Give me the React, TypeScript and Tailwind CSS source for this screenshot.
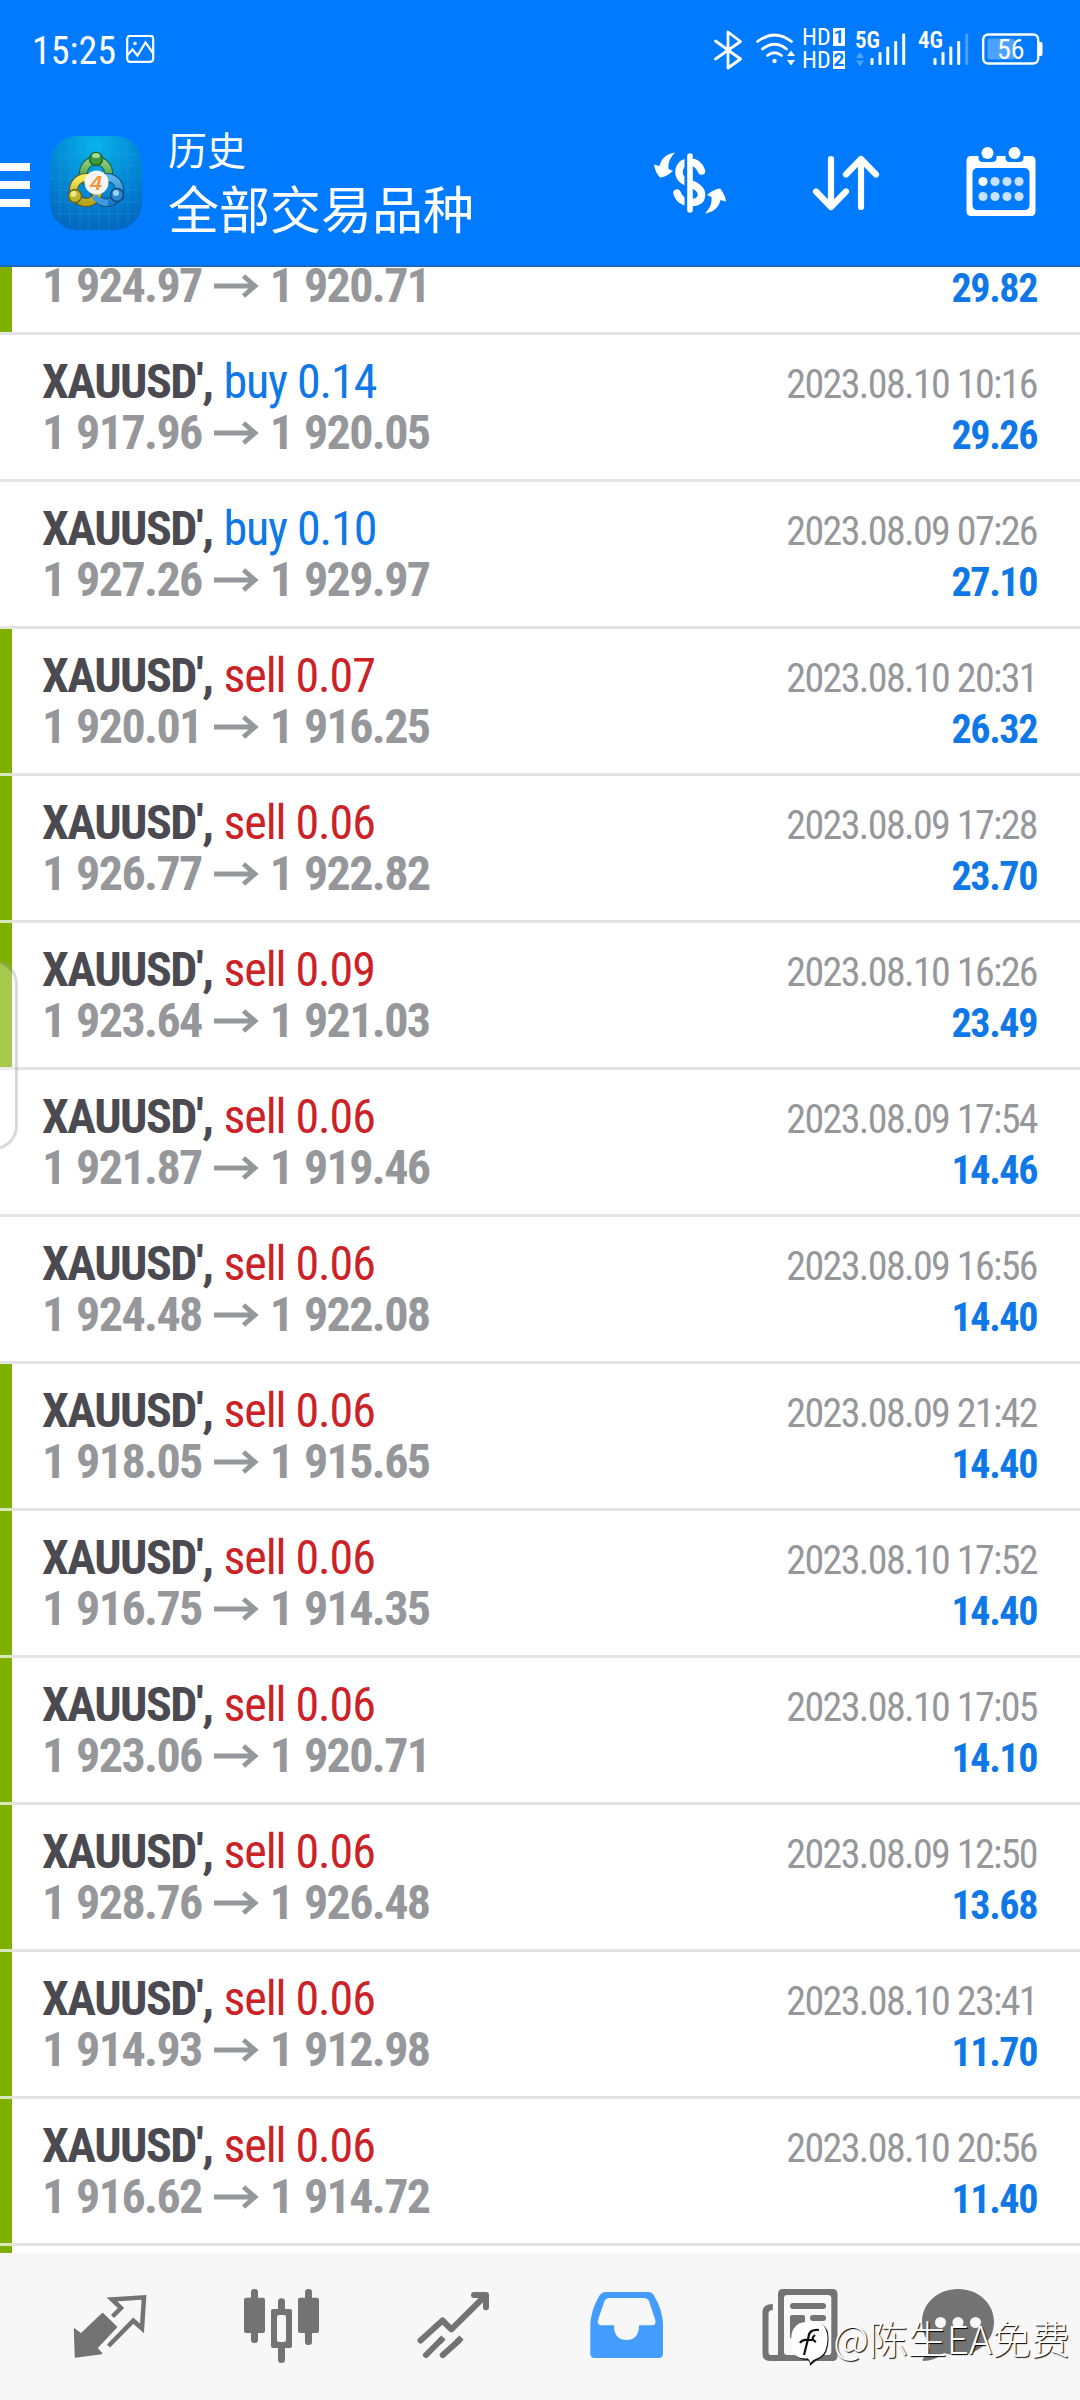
import type { ReactNode } from 'react';

interface Deal {
  side: 'buy' | 'sell';
  volume: string;
  open: string;
  close: string;
  time: string;
  profit: string;
  marked: boolean;
}

const deals: Deal[] = [
  { side: 'buy', volume: '0.14', open: '1 917.96', close: '1 920.05', time: '2023.08.10 10:16', profit: '29.26', marked: false },
  { side: 'buy', volume: '0.10', open: '1 927.26', close: '1 929.97', time: '2023.08.09 07:26', profit: '27.10', marked: false },
  { side: 'sell', volume: '0.07', open: '1 920.01', close: '1 916.25', time: '2023.08.10 20:31', profit: '26.32', marked: true },
  { side: 'sell', volume: '0.06', open: '1 926.77', close: '1 922.82', time: '2023.08.09 17:28', profit: '23.70', marked: true },
  { side: 'sell', volume: '0.09', open: '1 923.64', close: '1 921.03', time: '2023.08.10 16:26', profit: '23.49', marked: true },
  { side: 'sell', volume: '0.06', open: '1 921.87', close: '1 919.46', time: '2023.08.09 17:54', profit: '14.46', marked: false },
  { side: 'sell', volume: '0.06', open: '1 924.48', close: '1 922.08', time: '2023.08.09 16:56', profit: '14.40', marked: false },
  { side: 'sell', volume: '0.06', open: '1 918.05', close: '1 915.65', time: '2023.08.09 21:42', profit: '14.40', marked: true },
  { side: 'sell', volume: '0.06', open: '1 916.75', close: '1 914.35', time: '2023.08.10 17:52', profit: '14.40', marked: true },
  { side: 'sell', volume: '0.06', open: '1 923.06', close: '1 920.71', time: '2023.08.10 17:05', profit: '14.10', marked: true },
  { side: 'sell', volume: '0.06', open: '1 928.76', close: '1 926.48', time: '2023.08.09 12:50', profit: '13.68', marked: true },
  { side: 'sell', volume: '0.06', open: '1 914.93', close: '1 912.98', time: '2023.08.10 23:41', profit: '11.70', marked: true },
  { side: 'sell', volume: '0.06', open: '1 916.62', close: '1 914.72', time: '2023.08.10 20:56', profit: '11.40', marked: true },
];

function SignalBars({ faintLast }: { faintLast?: boolean }) {
  return (
    <svg className="h-[33px] w-[36px]" viewBox="0 0 36 33" fill="currentColor">
      <rect x="0.5" y="25" width="3" height="7" rx="1" />
      <rect x="8.5" y="19" width="3" height="13" rx="1" />
      <rect x="16.3" y="13.5" width="3" height="18.5" rx="1" />
      <rect x="24.2" y="8" width="3" height="24" rx="1" />
      <rect x="32.2" y="0.5" width="3" height="31.5" rx="1" opacity={faintLast ? 0.3 : 1} />
    </svg>
  );
}

function StatusBar() {
  return (
    <div className="flex h-[100px] items-center pl-[32px] text-white">
      <span className="w-[84px] pt-[2px] text-[38px] leading-none font-normal font-stretch-semi-condensed whitespace-nowrap">15:25</span>
      <svg className="ml-[10px] h-[30px] w-[29px]" viewBox="0 0 29 30" fill="none" stroke="currentColor" strokeWidth="2.2">
        <rect x="1.2" y="0.8" width="26" height="26" rx="3" />
        <path d="M1.5 20 L6.5 14.5 L11.5 20.5 L19.5 7.5 L27 18" />
        <circle cx="9" cy="8.5" r="1.8" fill="currentColor" stroke="none" />
      </svg>
      <svg className="ml-[559px] h-[40px] w-[28px]" viewBox="0 0 28 40" fill="none" stroke="currentColor" strokeWidth="2.8" strokeLinejoin="round" strokeLinecap="round">
        <path d="M1.5 11 L26.5 29 L14 38 V2 L26.5 11.5 L1.5 29" />
      </svg>
      <svg className="ml-[14px] h-[36px] w-[40px]" viewBox="0 0 40 36" fill="none" stroke="currentColor" strokeWidth="2.8" strokeLinecap="round">
        <path d="M1.5 9.5 Q18.5 -3.5 35.5 9.5 M6.5 17 Q18.5 7.5 30.5 17 M11.5 23.5 Q18.5 18 25.5 23.5" />
        <circle cx="18.5" cy="29" r="2.2" fill="currentColor" stroke="none" />
        <path d="M31 24 L35 18.5 L39 24 Z M31 28 L35 33.5 L39 28 Z" fill="currentColor" stroke="none" />
      </svg>
      <div className="mb-[4px] ml-[6px] flex w-[43px] flex-col gap-[5px] text-[24px] leading-[18px] font-normal">
        <div className="flex justify-between">
          <span className="font-stretch-semi-condensed">HD</span>
          <span className="w-[12px] bg-white text-center text-[19px] font-bold text-[#007aff]">1</span>
        </div>
        <div className="flex justify-between">
          <span className="font-stretch-semi-condensed">HD</span>
          <span className="w-[12px] bg-white text-center text-[19px] font-bold text-[#007aff]">2</span>
        </div>
      </div>
      <div className="relative ml-[25px] h-[34px]">
        <span className="absolute top-[-4px] left-[-15px] text-[23px] leading-none font-semibold font-stretch-semi-condensed">5G</span>
        <svg className="absolute top-[19px] left-[-14px] h-[15px] w-[8px]" viewBox="0 0 8 15" fill="currentColor" opacity="0.3">
          <path d="M0 6 L4 0 L8 6 Z M0 8.5 L4 14.5 L8 8.5 Z" />
        </svg>
        <SignalBars />
      </div>
      <div className="relative ml-[27px] h-[34px]">
        <span className="absolute top-[-4px] left-[-15px] text-[23px] leading-none font-semibold font-stretch-semi-condensed">4G</span>
        <SignalBars faintLast />
      </div>
      <div className="relative mb-[2px] ml-[13px] h-[32px] w-[61px]">
        <svg className="h-[32px] w-[61px]" viewBox="0 0 61 32" fill="none">
          <rect x="1.2" y="1.5" width="55" height="29" rx="5" stroke="white" strokeWidth="2.4" />
          <rect x="5.5" y="5.5" width="27" height="21" rx="2" fill="white" opacity="0.3" />
          <path d="M57 9 H59 Q60.5 9 60.5 11 V21 Q60.5 23 59 23 H57 Z" fill="white" />
        </svg>
        <span className="absolute top-[3px] left-[15px] text-[28px] leading-none font-stretch-semi-condensed">56</span>
      </div>
    </div>
  );
}

function AppLogo() {
  return (
    <svg className="h-[94px] w-[92px]" viewBox="0 0 92 94">
      <defs>
        <radialGradient id="tile" cx="0.5" cy="0.1" r="0.9">
          <stop offset="0" stopColor="#06b4ea" />
          <stop offset="0.5" stopColor="#048ad6" />
          <stop offset="1" stopColor="#0468c0" />
        </radialGradient>
        <linearGradient id="green" x1="0" y1="0" x2="0" y2="1">
          <stop offset="0" stopColor="#8fce7e" />
          <stop offset="1" stopColor="#2f8f2f" />
        </linearGradient>
        <linearGradient id="yellow" x1="0" y1="0" x2="0" y2="1">
          <stop offset="0" stopColor="#f3ea5a" />
          <stop offset="1" stopColor="#b3a51c" />
        </linearGradient>
        <linearGradient id="blue" x1="0" y1="0" x2="0" y2="1">
          <stop offset="0" stopColor="#5db4ec" />
          <stop offset="1" stopColor="#1c78c4" />
        </linearGradient>
      </defs>
      <rect width="92" height="94" rx="27" fill="url(#tile)" />
      <path
        d="M10 12 V82 M20 4 V90 M30 1 V93 M39 1 V93 M49 1 V93 M59 1 V93 M68 2 V92 M78 6 V88 M4 19 H88 M1 30 H91 M1 42 H91 M1 54 H91 M1 66 H91 M4 78 H88"
        stroke="#3ab4f0"
        strokeWidth="1"
        opacity="0.25"
      />
      <circle cx="46" cy="37" r="12.5" fill="none" stroke="#1d5c33" strokeWidth="9" />
      <circle cx="46" cy="37" r="12.5" fill="none" stroke="url(#green)" strokeWidth="7" />
      <circle cx="57" cy="54" r="12.5" fill="none" stroke="#124a80" strokeWidth="9" />
      <circle cx="57" cy="54" r="12.5" fill="none" stroke="url(#blue)" strokeWidth="7" />
      <circle cx="36" cy="54" r="12.5" fill="none" stroke="#5c5a16" strokeWidth="9" />
      <circle cx="36" cy="54" r="12.5" fill="none" stroke="url(#yellow)" strokeWidth="7" />
      <path d="M44 60 Q49 67 58 67" fill="none" stroke="#3f9ade" strokeWidth="6" />
      <circle cx="46" cy="23" r="6.5" fill="#3b9a3a" stroke="#1d6a2c" strokeWidth="1.5" />
      <ellipse cx="46" cy="19.5" rx="4" ry="2.5" fill="#a5dc9a" />
      <circle cx="25" cy="60" r="6.5" fill="#bdb52c" stroke="#6d6a16" strokeWidth="1.5" />
      <circle cx="23.5" cy="58" r="3" fill="#eee98c" />
      <circle cx="67" cy="59" r="6.5" fill="#2b86cf" stroke="#124a80" strokeWidth="1.5" />
      <circle cx="66" cy="57" r="3" fill="#9ad4f8" />
      <circle cx="46.5" cy="46.5" r="12" fill="#f4f4f2" />
      <text x="46" y="54" textAnchor="middle" fontSize="21" fontFamily="Liberation Sans" fontStyle="italic" fontWeight="bold" fill="#f0963c">
        4
      </text>
    </svg>
  );
}

function Header() {
  return (
    <div className="flex h-[165px] items-start text-white">
      <div className="mt-[63px] flex w-[30px] flex-col gap-[10px]">
        <div className="h-[8px] bg-white" />
        <div className="h-[8px] bg-white" />
        <div className="h-[8px] bg-white" />
      </div>
      <div className="mt-[36px] ml-[20px]">
        <AppLogo />
      </div>
      <div className="mt-[24px] ml-[26px] w-[320px] font-['Noto_Sans_CJK_SC',sans-serif] font-normal whitespace-nowrap">
        <div className="text-[39px] leading-[48px]">历史</div>
        <div className="text-[51px] leading-[70px]">全部交易品种</div>
      </div>
      <svg className="mt-[50px] ml-[164px] h-[66px] w-[76px]" viewBox="0 0 76 66" fill="none" stroke="currentColor" strokeLinecap="round">
        <path
          d="M49.5 21 C47 14 43 12 38 12 C31 12 27 16 27 22 C27 29 32 31 38 33.5 C45 36 49.5 39 49.5 44.5 C49.5 50.5 45 52.5 39 52.5 C31 52.5 27 49 25 43"
          strokeWidth="7.5"
        />
        <path d="M35.5 4 V62" stroke="#007aff" strokeWidth="6" />
        <path d="M38 6 V60" strokeWidth="5.6" />
        <g fill="currentColor" stroke="none">
          <path d="M23 2.5 C14 4 9 9 7.500 16 L2 14.5 Q3 22 8 27.5 Q14 27 21 21 L16.5 19 C16 12 18 8 23 2.5 Z" />
          <path d="M23 2.5 C14 4 9 9 7.500 16 L2 14.5 Q3 22 8 27.5 Q14 27 21 21 L16.5 19 C16 12 18 8 23 2.5 Z" transform="rotate(180 38 33)" />
        </g>
      </svg>
      <svg className="mt-[53px] ml-[84px] h-[60px] w-[68px]" viewBox="0 0 68 60" fill="none" stroke="currentColor" strokeWidth="6.2" strokeLinecap="round" strokeLinejoin="round">
        <path d="M19 6 V54 M4 38.5 L19 54 L34 38.5 M49 54 V6 M34 21.5 L49 6 L64 21.5" />
      </svg>
      <svg className="mt-[46px] ml-[86px] h-[72px] w-[70px]" viewBox="0 0 70 72" fill="currentColor">
        <path fillRule="evenodd" d="M5 10 H65 Q69.5 10 69.5 15 V65 Q69.5 70 65 70 H5 Q0.5 70 0.5 65 V15 Q0.5 10 5 10 Z M12 22 Q6.5 22 6.5 27.5 V58.5 Q6.5 64 12 64 H58 Q63.5 64 63.5 58.5 V27.5 Q63.5 22 58 22 Z" />
        <path d="M12.5 8 V12 Q12.5 16 17 16 H26 Q30.5 16 30.5 12 V8 Z M39.5 8 V12 Q39.5 16 44 16 H53 Q57.5 16 57.5 12 V8 Z" fill="#007aff" />
        <circle cx="21.5" cy="7" r="6" />
        <circle cx="48.5" cy="7" r="6" />
        <circle cx="17" cy="35.5" r="4.6" />
        <g opacity="0.78">
          <circle cx="29" cy="35.5" r="4.6" />
          <circle cx="41" cy="35.5" r="4.6" />
          <circle cx="53" cy="35.5" r="4.6" />
          <circle cx="17" cy="50.5" r="4.6" />
          <circle cx="29" cy="50.5" r="4.6" />
          <circle cx="41" cy="50.5" r="4.6" />
          <circle cx="53" cy="50.5" r="4.6" />
        </g>
      </svg>
    </div>
  );
}

function Prices({ open, close }: { open: string; close: string }) {
  return (
    <div className="flex items-center font-bold tracking-[-1.6px] text-[#96979b] [word-spacing:2px]">
      <span>{open}</span>
      <svg className="mr-[11px] ml-[12px] h-[26px] w-[45px]" viewBox="0 0 45 26" fill="none" stroke="currentColor" strokeWidth="4.8">
        <path d="M0 13 H42 M29.5 3 L41 13 L29.5 23" />
      </svg>
      <span>{close}</span>
    </div>
  );
}

function Divider({ tinted }: { tinted?: boolean }) {
  return (
    <div className="flex h-[3px] shrink-0 bg-[#e4e4e4]">
      <div className={tinted ? 'w-[12px] bg-[#dbe7bd]' : 'w-[12px]'} />
    </div>
  );
}

function DealRow({ deal }: { deal: Deal }) {
  const barColor = deal.marked ? 'bg-[#7fb000]' : 'bg-white';
  const sideColor = deal.side === 'buy' ? 'text-[#0f78e8]' : 'text-[#cc2227]';

  return (
    <div className="flex h-[144px] shrink-0">
      <div className={`w-[12px] ${barColor}`} />
      <div className="flex flex-1 justify-between pt-[21px] pr-[43px] pl-[30px] whitespace-nowrap">
        <div className="text-[48px] leading-[51px]">
          <div className="flex gap-[11px]">
            <span className="font-bold tracking-[-1.5px] text-[#4b4a50]">XAUUSD',</span>
            <span className={`tracking-[-1.1px] ${sideColor}`}>{deal.side} {deal.volume}</span>
          </div>
          <Prices open={deal.open} close={deal.close} />
        </div>
        <div className="pt-[3px] text-right text-[40px] leading-[51px]">
          <div className="tracking-[-1.62px] text-[#96979b]">{deal.time}</div>
          <div className="font-bold tracking-[-1.4px] text-[#0f78e8]">{deal.profit}</div>
        </div>
      </div>
    </div>
  );
}

function NavIcon({ children, active }: { children: ReactNode; active?: boolean }) {
  return (
    <div className={`flex justify-center ${active ? 'text-[#449cff]' : 'text-[#737373]'}`}>
      <svg className="h-[80px] w-[100px]" viewBox="0 0 100 80" fill="currentColor">
        {children}
      </svg>
    </div>
  );
}

function BottomNav() {
  return (
    <div className="relative h-[147px] bg-[#f7f7f7] px-6 pt-[35px]">
      <div className="grid grid-cols-6">
        <NavIcon>
          <path d="M14.5 41 L21 46 L42.6 25.5 L56.5 39 L36.8 60 L41.5 65.5 L15.5 69 Z" stroke="currentColor" strokeWidth="1.5" strokeLinejoin="round" />
          <path d="M52.5 28.5 L61 20 L52 11.5 L84 9.3 L82 40.5 L73.3 32.7 L48.5 58" fill="none" stroke="currentColor" strokeWidth="4.5" />
        </NavIcon>
        <NavIcon>
          <rect x="12" y="9.7" width="21" height="35.3" rx="2" />
          <rect x="19" y="1" width="7" height="54" rx="3" />
          <path fillRule="evenodd" d="M41 21 H58 Q60 21 60 23 V58 Q60 60 58 60 H41 Q39 60 39 58 V23 Q39 21 41 21 Z M47 27 Q45 27 45 29 V52 Q45 54 47 54 H52 Q54 54 54 52 V29 Q54 27 52 27 Z" />
          <path d="M46 22 V13.5 Q46 10.3 49.5 10.3 Q53 10.3 53 13.5 V22 Z M46 59 V72 Q46 75 49.5 75 Q53 75 53 72 V59 Z" />
          <rect x="66" y="9.7" width="21" height="35.3" rx="2" />
          <rect x="73" y="1" width="7" height="56" rx="3" />
        </NavIcon>
        <NavIcon>
          <g fill="none" stroke="currentColor" strokeWidth="6" strokeLinecap="round" strokeLinejoin="round">
            <path d="M16.5 52.5 L38.5 32.5 L47.4 41.3 L80 9" />
            <path d="M70 7 H82 V19.3" />
            <path d="M22 67 L37 52 M38.8 67 L55 52.5" />
            <path d="M35 54 L39.5 49.5 M53 54 L57.5 49.5" strokeLinecap="butt" />
          </g>
        </NavIcon>
        <NavIcon active>
          <path
            fillRule="evenodd"
            d="M29.5 4 H72.5 Q76 4 78 7.5 Q86.5 22 87 36 V65.5 Q87 70 82.5 70 H19 Q14.3 70 14.3 65.5 V36 Q15 22 23.5 7.5 Q26 4 29.5 4 Z M33.5 10 Q30 10 28.5 13 L22 32 Q21 37 25 37.3 H38 Q38 52 50.5 52 Q63 52 63 37.3 H76 Q80.5 37.3 79.3 32 L73 13 Q71 10 67.5 10 Z"
          />
        </NavIcon>
        <NavIcon>
          <path fillRule="evenodd" d="M35 1 H84.5 Q89.5 1 89.5 6 V68 Q89.5 73 84.5 73 H22 Q14.5 73 14.5 66 V24 Q14.5 16 24.8 16 V22 Q20.5 22 20.5 26 V64 Q20.5 67 23 67 H30 V6 Q30 1 35 1 Z M39 7 Q36 7 36 10 V64 Q36 67 39 67 H80 Q83.3 67 83.3 64 V10 Q83.3 7 80 7 Z" />
          <rect x="42" y="15" width="36" height="6" rx="3" />
          <rect x="42" y="27" width="15" height="24" rx="2" />
          <rect x="62" y="27" width="16" height="6" rx="3" />
        </NavIcon>
        <NavIcon>
          <path d="M38 1 C58 1 74 15 74 34 C74 53 58 67 38 67 C32 67 27 66 24 65 Q14 73 3.5 73 Q1.5 72 3.5 70 Q10 65 10 56 Q2 47 2 34 C2 15 18 1 38 1 Z" />
          <g fill="#f7f7f7">
            <circle cx="20.5" cy="34.5" r="5.5" />
            <circle cx="38" cy="34.5" r="5.5" />
            <circle cx="55.5" cy="34.5" r="5.5" />
          </g>
        </NavIcon>
      </div>
      <div className="absolute top-[54px] right-[10px] flex items-center font-['Noto_Sans_CJK_SC',sans-serif] text-[39px] leading-[48px] font-light whitespace-nowrap text-white [text-shadow:1px_1px_1px_#000]">
        <svg className="mt-[14px] mr-[3px] h-[46px] w-[40px]" viewBox="0 0 40 46">
          <path d="M10 4 Q20 0 31 3 Q39 6 38.5 19 Q38 33 31 37 Q26 39 20 45 Q20 41 18 39 Q10 39 6 35 Q2 30 2 20 Q2 8 10 4 Z" fill="#111" />
          <path d="M9 2.5 Q19 -1 30 2 Q37.5 6 37.5 18 Q37 32 30 36 Q24 38 20 42 Q20 39 18 37.5 Q9 38 5 34 Q1 29 1 19 Q1 7 9 2.5 Z" fill="white" />
          <path d="M29 9 Q19 8 18.5 16 L14 34 M10 22 Q12 18 18 19 H23 M25 14 Q20 18 26 21" fill="none" stroke="#111" strokeWidth="2.2" />
        </svg>
        @陈生EA免费
      </div>
    </div>
  );
}

export default function App() {
  return (
    <div className="relative flex h-[2400px] w-[1080px] flex-col overflow-hidden bg-white font-['Roboto',sans-serif]">
      <div className="h-[267px] shrink-0 border-b-2 border-[#1a68c4] bg-[#007aff]">
        <StatusBar />
        <Header />
      </div>
      <div className="flex h-[1986px] flex-col overflow-hidden font-stretch-condensed">
        {/* row scrolled half under the header */}
        <div className="flex h-[65px] shrink-0">
          <div className="w-[12px] bg-[#7fb000]" />
          <div className="flex flex-1 justify-between pr-[43px] pl-[30px] whitespace-nowrap">
            <div className="pt-px text-[48px] leading-[36px]">
              <Prices open="1 924.97" close="1 920.71" />
            </div>
            <div className="pt-[3px] text-[40px] leading-[37px] font-bold tracking-[-1.4px] text-[#0f78e8]">29.82</div>
          </div>
        </div>
        <Divider />
        {deals.map((deal, i) => (
          <div key={deal.time}>
            <DealRow deal={deal} />
            <Divider tinted={deal.marked && (i === deals.length - 1 || deals[i + 1].marked)} />
          </div>
        ))}
        <div className="h-[7px] w-[12px] bg-[#7fb000]" />
      </div>
      <BottomNav />
      {/* edge panel handle */}
      <div className="absolute top-[960px] left-[-40px] h-[190px] w-[58px] rounded-[24px] border-[3px] border-black/15 bg-white/30" />
    </div>
  );
}
